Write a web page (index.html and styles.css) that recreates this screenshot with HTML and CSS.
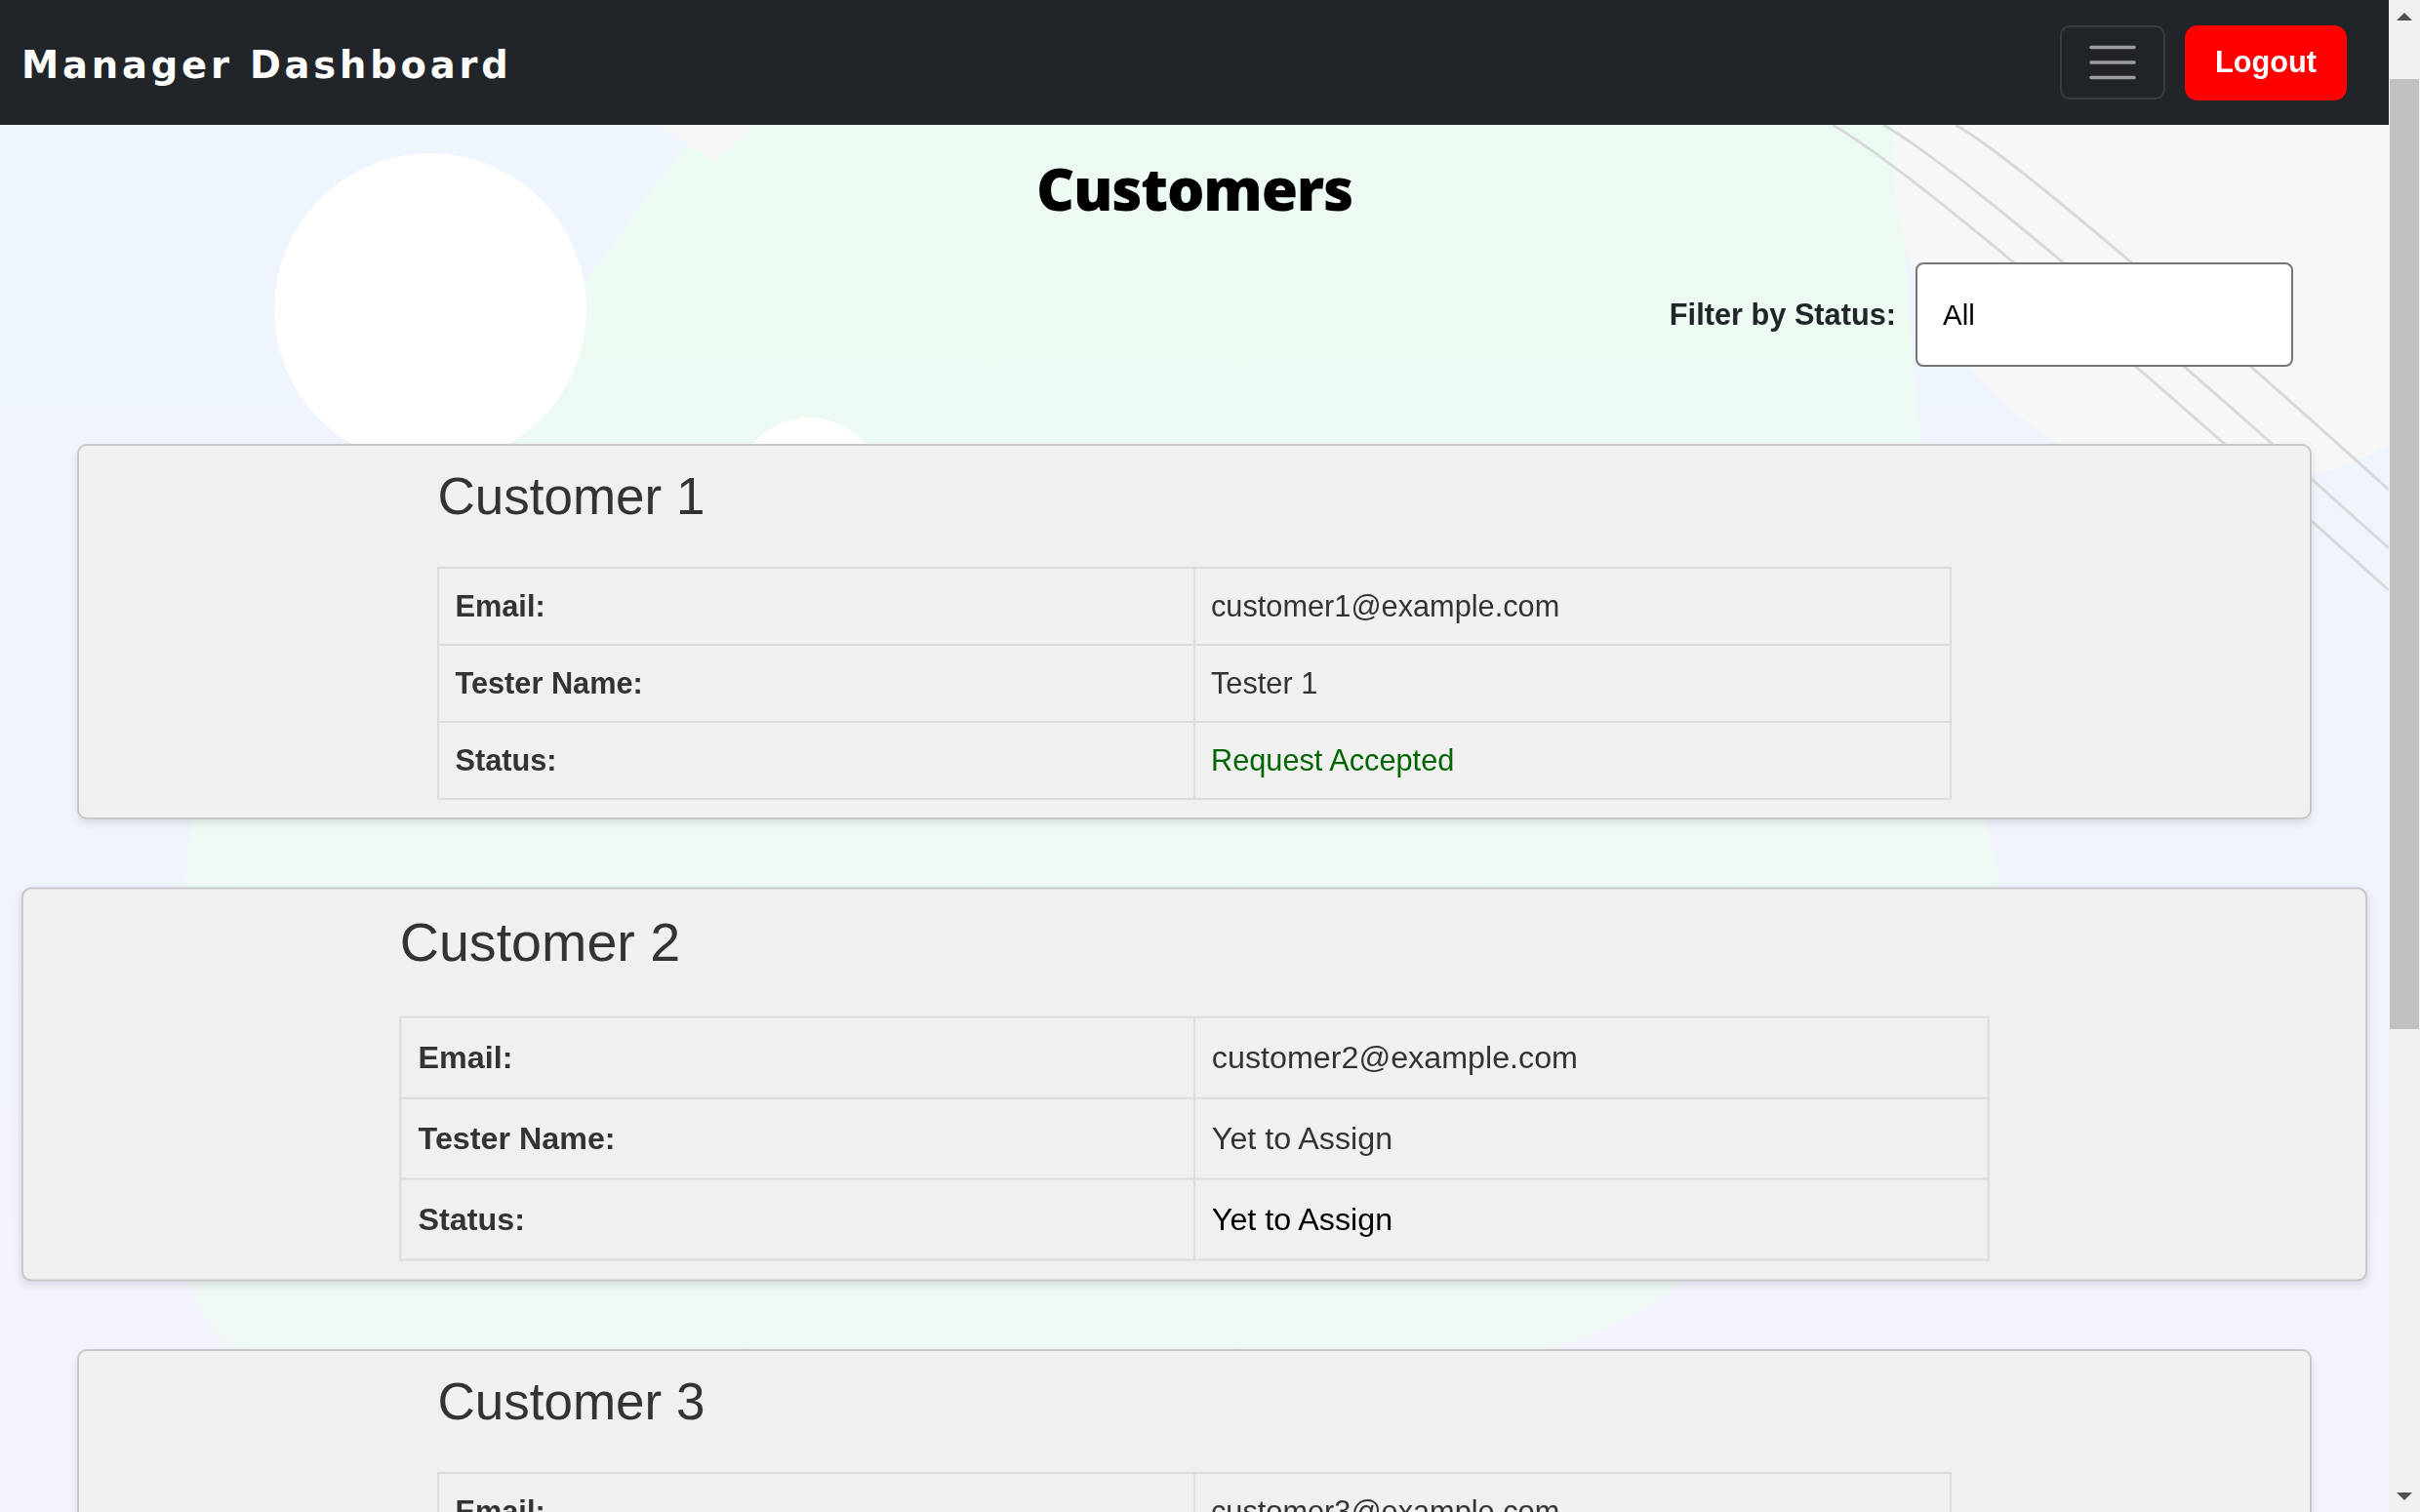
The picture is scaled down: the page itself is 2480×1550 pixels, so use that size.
FILE: index.html
```html
<!DOCTYPE html>
<html lang="en">
<head>
<meta charset="utf-8">
<title>Manager Dashboard</title>
<link rel="stylesheet" href="styles.css">
</head>
<body>
<div class="backdrop" aria-hidden="true">
  <svg viewBox="0 0 2448 1550" preserveAspectRatio="none">
    <defs>
      <linearGradient id="bgBase" x1="0" y1="0" x2="0" y2="1">
        <stop offset="0" stop-color="#eef5fd"/>
        <stop offset="1" stop-color="#f3f3fc"/>
      </linearGradient>
      <linearGradient id="bgGreen" x1="0" y1="0" x2="0" y2="1">
        <stop offset="0" stop-color="#ecfbf2"/>
        <stop offset="1" stop-color="#eff8f5"/>
      </linearGradient>
    </defs>
    <rect width="2448" height="1550" fill="url(#bgBase)"/>
    <path d="M720 128 L1950 128 C1945 320 1990 700 2050 900 C1900 1200 1700 1395 1500 1395 L300 1395 C200 1395 185 1320 185 1200 L190 900 C200 700 400 480 590 300 C630 250 670 190 720 128 Z" fill="url(#bgGreen)"/>
    <path d="M669 128 L775 128 L735 165 Z" fill="#f5f5f5"/>
    <circle cx="2280" cy="160" r="340" fill="#f7f7f7"/>
    <circle cx="441" cy="317" r="160" fill="#ffffff"/>
    <circle cx="829" cy="503" r="75" fill="#ffffff"/>
    <g fill="none" stroke="#d9d9d9" stroke-width="3">
      <path d="M1878 128 Q1986 190 2448 605"/>
      <path d="M1930 128 Q2027 183 2448 562"/>
      <path d="M2004 128 Q2082 172 2448 502"/>
    </g>
  </svg>
</div>

<div class="scrollbar" aria-hidden="true">
  <div class="scroll-btn scroll-btn-up"><span class="arrow-up"></span></div>
  <div class="scroll-thumb"></div>
  <div class="scroll-track-rest"></div>
  <div class="scroll-btn scroll-btn-down"><span class="arrow-down"></span></div>
</div>

<nav class="navbar">
  <span class="brand">Manager Dashboard</span>
  <div class="nav-actions">
    <button class="toggler" type="button" aria-label="Toggle navigation">
      <svg viewBox="0 0 48 36">
        <g stroke="rgba(255,255,255,0.55)" stroke-width="3.5" stroke-linecap="round">
          <line x1="2" y1="2.5" x2="46" y2="2.5"/>
          <line x1="2" y1="18" x2="46" y2="18"/>
          <line x1="2" y1="33.5" x2="46" y2="33.5"/>
        </g>
      </svg>
    </button>
    <button class="logout" type="button">Logout</button>
  </div>
</nav>

<main class="page">
  <h1 class="page-title">Customers</h1>

  <div class="filter-row">
    <label class="filter-label" for="status">Filter by Status:</label>
    <select class="status-select" id="status">
      <option>All</option>
      <option>Request Accepted</option>
      <option>Yet to Assign</option>
    </select>
  </div>

  <div class="customer-list">
    <section class="card">
      <div class="card-inner">
        <h2 class="card-title">Customer 1</h2>
        <table class="info-table">
          <tr><td class="label">Email:</td><td>customer1@example.com</td></tr>
          <tr><td class="label">Tester Name:</td><td>Tester 1</td></tr>
          <tr><td class="label">Status:</td><td class="status-accepted">Request Accepted</td></tr>
        </table>
      </div>
    </section>

    <section class="card is-hovered">
      <div class="card-inner">
        <h2 class="card-title">Customer 2</h2>
        <table class="info-table">
          <tr><td class="label">Email:</td><td>customer2@example.com</td></tr>
          <tr><td class="label">Tester Name:</td><td>Yet to Assign</td></tr>
          <tr><td class="label">Status:</td><td class="status-pending">Yet to Assign</td></tr>
        </table>
      </div>
    </section>

    <section class="card">
      <div class="card-inner">
        <h2 class="card-title">Customer 3</h2>
        <table class="info-table">
          <tr><td class="label">Email:</td><td>customer3@example.com</td></tr>
          <tr><td class="label">Tester Name:</td><td>Tester 2</td></tr>
          <tr><td class="label">Status:</td><td class="status-accepted">Request Accepted</td></tr>
        </table>
      </div>
    </section>
  </div>
</main>
</body>
</html>
```

FILE: styles.css
```css
html {
  background: #eef5fd;
}

body {
  margin: 0;
  padding-right: 32px;
  font-family: "Liberation Sans", Arial, sans-serif;
  color: #212529;
}

/* Decorative backdrop */
.backdrop {
  position: fixed;
  top: 0;
  left: 0;
  right: 32px;
  bottom: 0;
  z-index: -1;
}
.backdrop svg {
  display: block;
  width: 100%;
  height: 100%;
}

/* Window scrollbar */
.scrollbar {
  position: fixed;
  top: 0;
  right: 0;
  width: 32px;
  height: 100vh;
  display: flex;
  flex-direction: column;
  background: #f1f1f1;
}
.scroll-btn {
  display: flex;
  justify-content: center;
}
.scroll-btn-up {
  height: 81px;
  align-items: flex-start;
  padding-top: 13px;
  box-sizing: border-box;
}
.scroll-btn-down {
  height: 48px;
  align-items: flex-end;
  padding-bottom: 12px;
  box-sizing: border-box;
}
.arrow-up {
  width: 0;
  height: 0;
  border-left: 8px solid transparent;
  border-right: 8px solid transparent;
  border-bottom: 8px solid #505050;
}
.arrow-down {
  width: 0;
  height: 0;
  border-left: 8px solid transparent;
  border-right: 8px solid transparent;
  border-top: 8px solid #505050;
}
.scroll-thumb {
  height: 974px;
  margin: 0 1px;
  background: #c1c1c1;
}
.scroll-track-rest {
  flex: 1;
}

/* Navbar */
.navbar {
  display: flex;
  align-items: center;
  justify-content: space-between;
  height: 128px;
  box-sizing: border-box;
  padding: 0 43px 0 22px;
  background: #212529;
}
.brand {
  font-family: "DejaVu Sans", Verdana, sans-serif;
  font-weight: bold;
  font-size: 38.4px;
  letter-spacing: 3.84px;
  color: #ffffff;
  padding-top: 5px;
}
.nav-actions {
  display: flex;
  align-items: center;
  gap: 20px;
}
.toggler {
  display: flex;
  align-items: center;
  justify-content: center;
  width: 108px;
  height: 76px;
  box-sizing: border-box;
  padding: 0;
  border: 2px solid rgba(255, 255, 255, 0.1);
  border-radius: 10px;
  background: transparent;
}
.toggler svg {
  display: block;
  width: 48px;
  height: 36px;
}
.logout {
  height: 77px;
  padding: 0 31px;
  border: 0;
  border-radius: 13px;
  background: #ff0000;
  color: #ffffff;
  font-family: "Liberation Sans", Arial, sans-serif;
  font-weight: bold;
  font-size: 30.72px;
}

/* Page */
.page {
  padding: 28px 0 29px;
}
.page-title {
  margin: 0;
  text-align: center;
  font-family: "Open Sans", sans-serif;
  font-weight: 800;
  font-size: 60.5px;
  letter-spacing: -1.2px;
  line-height: 74px;
  color: #000000;
}
.filter-row {
  display: flex;
  justify-content: flex-end;
  align-items: center;
  gap: 20px;
  margin-top: 39px;
  padding-right: 98px;
}
.filter-label {
  font-weight: bold;
  font-size: 30.72px;
  color: #212529;
}
.status-select {
  -webkit-appearance: none;
  appearance: none;
  width: 387px;
  height: 107px;
  box-sizing: border-box;
  padding: 0 26px;
  border: 2px solid #767676;
  border-radius: 8px;
  background: #ffffff;
  font-family: "Liberation Sans", Arial, sans-serif;
  font-size: 29.5px;
  color: #000000;
}

/* Customer cards */
.customer-list {
  display: flex;
  flex-direction: column;
  gap: 79px;
  padding: 79px 79px 0;
}
.card {
  padding: 20px 0 18px;
  border: 2px solid #c8c8c8;
  border-radius: 10px;
  background: #f0f0f0;
  box-shadow: 0 4px 8px rgba(0, 0, 0, 0.1);
}
.card.is-hovered {
  transform: scale(1.05);
}
.card-inner {
  width: 67.85%;
  margin: 0 auto;
}
.card-title {
  margin: 0 0 40px;
  font-size: 53px;
  line-height: 64px;
  font-weight: normal;
  color: #333333;
}
.info-table {
  width: 100%;
  table-layout: fixed;
  border-collapse: collapse;
  border: 2px solid #dcdcdc;
}
.info-table td {
  padding: 0 16px;
  border: 2px solid #dcdcdc;
  line-height: 77px;
  font-size: 30.72px;
  color: #333333;
}
.info-table .label {
  font-weight: bold;
}
.info-table .status-accepted {
  color: #006400;
}
.info-table .status-pending {
  color: #000000;
}
```
